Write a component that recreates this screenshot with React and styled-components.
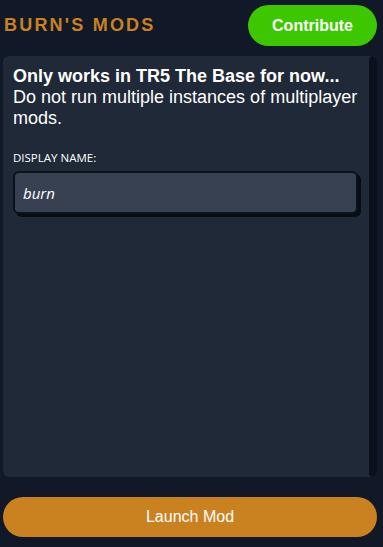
import React, { useState } from 'react';
import styled, { createGlobalStyle } from 'styled-components';

const GlobalStyle = createGlobalStyle`
    html, body {
        margin: 0;
        padding: 0;
        background: #111827;
        font-family: "Liberation Sans", Arial, sans-serif;
    }
`

const App = () => {
    const [name, setName] = useState('burn');

    return (
        <>
            <GlobalStyle />
            <StPage>
                <StHeader>
                    <StTitle>BURN'S MODS</StTitle>
                    <StContribute>Contribute</StContribute>
                </StHeader>
                <StCard>
                    <StCardBody>
                        <StNotice>Only works in TR5 The Base for now...</StNotice>
                        <StText>Do not run multiple instances of multiplayer mods.</StText>
                        <StLabel>DISPLAY NAME:</StLabel>
                        <StInput value={name} onChange={(e) => setName(e.target.value)} />
                    </StCardBody>
                    <StScrollbar />
                </StCard>
                <StLaunch>Launch Mod</StLaunch>
            </StPage>
        </>
    );
};

const StPage = styled.div`
    width: 383px;
    height: 547px;
    box-sizing: border-box;
    padding: 0 6px 10px 3px;
    display: flex;
    flex-direction: column;
`

const StHeader = styled.div`
    height: 51px;
    display: flex;
    align-items: center;
    justify-content: space-between;
    padding: 0 0 0 1px;
    box-sizing: border-box;
`

const StTitle = styled.h1`
    margin: 0;
    font-size: 18px;
    font-weight: bold;
    letter-spacing: 2.2px;
    color: #ca8220;
`

const StContribute = styled.button`
    width: 129px;
    height: 41px;
    border: none;
    border-radius: 21px;
    background-color: #3dc700;
    color: #fff;
    font-family: "Liberation Sans", Arial, sans-serif;
    font-size: 16px;
    font-weight: bold;
    cursor: pointer;
`

const StCard = styled.div`
    margin-top: 5px;
    height: 421px;
    display: flex;
    border-radius: 6px;
    overflow: hidden;
    background-color: #1f2937;
`

const StCardBody = styled.div`
    flex: 1;
    padding: 10px 8px 0 10px;
    color: #fff;
`

const StScrollbar = styled.div`
    width: 8px;
    background-color: #0b111c;
    border-radius: 4px;
`

const StNotice = styled.div`
    font-size: 18px;
    font-weight: bold;
`

const StText = styled.div`
    font-size: 18px;
`

const StLabel = styled.div`
    margin-top: 21px;
    font-family: "Open Sans", "Noto Sans", sans-serif;
    font-size: 11.5px;
    color: #fff;
`

const StInput = styled.input`
    display: block;
    margin-top: 6px;
    width: 345px;
    height: 43px;
    box-sizing: border-box;
    padding: 0 8px;
    border: 2px solid #0d121b;
    border-radius: 6px;
    box-shadow: 3px 3px 0 #080c13;
    background-color: #374151;
    color: #fff;
    font-family: "Open Sans", "Noto Sans", sans-serif;
    font-size: 15px;
    font-style: italic;
    outline: none;
`

const StLaunch = styled.button`
    margin-top: 20px;
    height: 40px;
    width: 374px;
    border: none;
    border-radius: 20px;
    background-color: #ca8220;
    color: #fff;
    font-family: "Liberation Sans", Arial, sans-serif;
    font-size: 16px;
    cursor: pointer;
`

export default App;
